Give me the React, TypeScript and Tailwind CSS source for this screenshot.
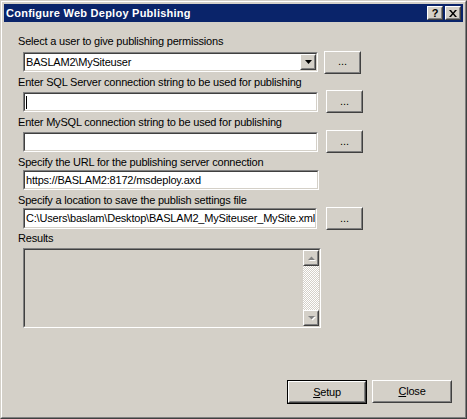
import React from "react";

const FONT = { fontFamily: '"Liberation Sans", Arial, sans-serif' };

function Sunken({ className = "", inner = "bg-white", children }: { className?: string; inner?: string; children?: React.ReactNode }) {
  return (
    <div className={`border border-t-[#808080] border-l-[#808080] border-b-white border-r-white ${className}`}>
      <div className={`h-full w-full border border-t-[#404040] border-l-[#404040] border-b-[#d4d0c8] border-r-[#d4d0c8] ${inner}`}>
        {children}
      </div>
    </div>
  );
}

function Raised({ className = "", children }: { className?: string; children?: React.ReactNode }) {
  return (
    <div className={`border border-t-white border-l-white border-b-[#404040] border-r-[#404040] bg-[#d4d0c8] ${className}`}>
      <div className="h-full w-full border border-t-[#d4d0c8] border-l-[#d4d0c8] border-b-[#808080] border-r-[#808080] flex items-center justify-center">
        {children}
      </div>
    </div>
  );
}

function Dots({ className = "" }: { className?: string }) {
  return (
    <Raised className={`w-[37px] h-[23px] shrink-0 ${className}`}>
      <span className="text-[11px] leading-none text-black -mt-[1px]">...</span>
    </Raised>
  );
}

function Label({ children, className = "" }: { children: React.ReactNode; className?: string }) {
  return <div className={`text-[11px] leading-[13px] h-[13px] text-black tracking-[-0.2px] whitespace-nowrap ${className}`}>{children}</div>;
}

function FieldText({ children }: { children: React.ReactNode }) {
  return <div className="pl-[1px] pt-[2px] text-[11px] leading-[13px] text-black tracking-[-0.2px] whitespace-nowrap overflow-hidden">{children}</div>;
}

export default function App() {
  return (
    <div className="w-[467px] h-[419px] bg-[#d4d0c8]" style={FONT}>
      <div className="h-full w-full border border-t-[#d4d0c8] border-l-[#d4d0c8] border-b-[#404040] border-r-[#404040]">
        <div className="h-full w-full border border-t-white border-l-white border-b-[#808080] border-r-[#808080] p-[2px] flex flex-col">
          {/* Title bar */}
          <div className="h-[18px] bg-[#0a246a] flex items-center pl-[2px] pr-[2px] shrink-0">
            <div className="text-white font-bold text-[11px] tracking-[0.25px] leading-none flex-1 whitespace-nowrap">
              Configure Web Deploy Publishing
            </div>
            <Raised className="w-[16px] h-[14px]">
              <span className="text-[11px] font-bold leading-none text-black">?</span>
            </Raised>
            <Raised className="w-[16px] h-[14px] ml-[2px]">
              <svg width="8" height="7" viewBox="0 0 8 7">
                <path d="M0 0h2l2 2.5L6 0h2L5 3.5 8 7H6L4 4.5 2 7H0l3-3.5z" fill="#000" />
              </svg>
            </Raised>
          </div>

          {/* Content */}
          <div className="flex-1 flex flex-col pl-[14px]">
            <Label className="mt-[13px]">Select a user to give publishing permissions</Label>
            <div className="flex items-center h-[24px] mt-[2px] ml-[5px]">
              <Sunken className="w-[295px] h-[20px]">
                <div className="flex h-full">
                  <div className="flex-1">
                    <FieldText>BASLAM2\MySiteuser</FieldText>
                  </div>
                  <Raised className="w-[16px] h-[16px]">
                    <svg width="7" height="4" viewBox="0 0 7 4">
                      <path d="M0 0h7L3.5 4z" fill="#000" />
                    </svg>
                  </Raised>
                </div>
              </Sunken>
              <Dots className="ml-[6px]" />
            </div>

            <Label className="mt-[2px]">Enter SQL Server connection string to be used for publishing</Label>
            <div className="flex items-center h-[23px] mt-[1px] ml-[5px]">
              <Sunken className="w-[295px] h-[20px]">
                <div className="ml-[1px] mt-[2px] w-[1px] h-[13px] bg-black" />
              </Sunken>
              <Dots className="ml-[8px]" />
            </div>

            <Label className="mt-[3px]">Enter MySQL connection string to be used for publishing</Label>
            <div className="flex items-center h-[23px] mt-[1px] ml-[5px]">
              <Sunken className="w-[295px] h-[20px]" />
              <Dots className="ml-[8px]" />
            </div>

            <Label className="mt-[3px]">Specify the URL for the publishing server connection</Label>
            <div className="flex items-center h-[20px] mt-[1px] ml-[5px]">
              <Sunken className="w-[296px] h-[20px]">
                <FieldText>https://BASLAM2:8172/msdeploy.axd</FieldText>
              </Sunken>
            </div>

            <Label className="mt-[4px]">Specify a location to save the publish settings file</Label>
            <div className="flex items-center h-[23px] mt-[0px] ml-[5px]">
              <Sunken className="w-[294px] h-[21px]">
                <FieldText>C:\Users\baslam\Desktop\BASLAM2_MySiteuser_MySite.xml</FieldText>
              </Sunken>
              <Dots className="ml-[9px]" />
            </div>

            <Label className="mt-[2px]">Results</Label>
            <div className="mt-[3px] ml-[5px]">
              <Sunken className="w-[298px] h-[80px]" inner="bg-[#d4d0c8]">
                <div className="flex h-full justify-end">
                  <div className="w-[16px] h-full flex flex-col">
                    <Raised className="w-[16px] h-[16px] shrink-0">
                      <svg width="9" height="6" viewBox="0 0 9 6">
                        <path d="M1 5h7L4.5 1.5z" fill="#fff" transform="translate(1,1)" />
                        <path d="M1 5h7L4.5 1.5z" fill="#808080" />
                      </svg>
                    </Raised>
                    <div className="flex-1 bg-[repeating-conic-gradient(#ffffff_0_25%,#d4d0c8_0_50%)] bg-[length:2px_2px]" />
                    <Raised className="w-[16px] h-[16px] shrink-0">
                      <svg width="9" height="6" viewBox="0 0 9 6">
                        <path d="M1 1h7L4.5 4.5z" fill="#fff" transform="translate(1,1)" />
                        <path d="M1 1h7L4.5 4.5z" fill="#808080" />
                      </svg>
                    </Raised>
                  </div>
                </div>
              </Sunken>
            </div>

            <div className="flex justify-end mt-[52px] pr-[11px] gap-[5px]">
              <div className="border border-black w-[80px] h-[24px]">
                <Raised className="w-full h-full">
                  <span className="text-[11px] leading-none text-black tracking-[-0.2px]">
                    <span className="underline">S</span>etup
                  </span>
                </Raised>
              </div>
              <Raised className="w-[80px] h-[23px]">
                <span className="text-[11px] leading-none text-black tracking-[-0.2px]">
                  <span className="underline">C</span>lose
                </span>
              </Raised>
            </div>
          </div>
        </div>
      </div>
    </div>
  );
}
